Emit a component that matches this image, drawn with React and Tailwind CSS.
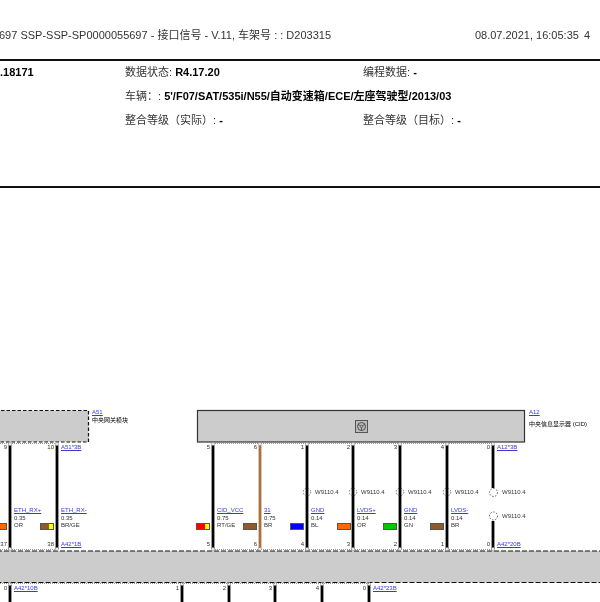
const sans = "font-['Liberation_Sans','Noto_Sans_CJK_SC',sans-serif]"

const wires = [
  { x: 10, top: "9", bottom: "37", name: "ETH_RX+", size: "0.35", code: "OR", colors: ["#ff6a00"], sw: -7 },
  { x: 57, top: "10", bottom: "38", name: "ETH_RX-", size: "0.35", code: "BR/GE", colors: ["#8f5a2c", "#ffff00"], sw: 40 },
  { x: 213, top: "5", bottom: "5", name: "CID_VCC", size: "0.75", code: "RT/GE", colors: ["#ff0000", "#ffff00"], sw: 196 },
  { x: 260, top: "6", bottom: "6", name: "31", size: "0.75", code: "BR", colors: ["#8f5a2c"], sw: 243, stroke: "#a9703f" },
  { x: 307, top: "1", bottom: "4", name: "GND", size: "0.14", code: "BL", colors: ["#0000ff"], sw: 290, w9: true },
  { x: 353, top: "2", bottom: "3", name: "LVDS+", size: "0.14", code: "OR", colors: ["#ff6a00"], sw: 337, w9: true },
  { x: 400, top: "3", bottom: "2", name: "GND", size: "0.14", code: "GN", colors: ["#00c800"], sw: 383, w9: true },
  { x: 447, top: "4", bottom: "1", name: "LVDS-", size: "0.14", code: "BR", colors: ["#8f5a2c"], sw: 430, w9: true },
]

const lowerWires = [
  { x: 10, pin: "0" },
  { x: 182, pin: "1" },
  { x: 229, pin: "2" },
  { x: 275, pin: "3" },
  { x: 322, pin: "4" },
  { x: 369, pin: "0" },
]

// y values below are page coordinates, the canvas starts at 188
const Y0 = 188

function Label({ x, y, className = "text-[6px] text-[#333]", children }) {
  return (
    <div
      className={`absolute whitespace-nowrap leading-none ${className}`}
      style={{ left: x, top: y - Y0 }}
    >
      {children}
    </div>
  )
}

function Link({ x, y, children }) {
  return (
    <Label x={x} y={y} className="text-[6px] text-[#3a3ad0] underline">
      {children}
    </Label>
  )
}

function Pin({ x, y, children }) {
  return (
    <div
      className="absolute w-5 text-right whitespace-nowrap leading-none text-[6px] text-[#333]"
      style={{ left: x - 23, top: y - Y0 }}
    >
      {children}
    </div>
  )
}

function WireLabel({ wire }) {
  return (
    <div
      className="absolute flex items-end gap-[3px] leading-[7.5px] text-[6px] text-[#333] whitespace-nowrap"
      style={{ left: wire.sw, top: 507 - Y0 }}
    >
      <div className="flex h-[7px] w-[14px] border border-[#555]">
        {wire.colors.map((c, i) => (
          <div key={c} className={i === 0 ? "flex-1" : "w-[4px]"} style={{ background: c }} />
        ))}
      </div>
      <div className="flex flex-col" style={{ marginLeft: wire.x + 4 - wire.sw - 17 }}>
        <span className="text-[#3a3ad0] underline">{wire.name}</span>
        <span>{wire.size}</span>
        <span>{wire.code}</span>
      </div>
    </div>
  )
}

function Diagram() {
  return (
    <svg className="absolute left-0 top-0" width="600" height="414" viewBox={`0 ${Y0} 600 414`}>
      <rect x="-10" y="410.5" width="98.5" height="31.5" fill="#cccccc" stroke="#111" strokeWidth="1.2" strokeDasharray="3.5 2" />
      <rect x="197.5" y="410.5" width="327" height="31.5" fill="#cccccc" stroke="#333" strokeWidth="1.2" />
      <rect x="-10" y="551" width="620" height="31.5" fill="#cccccc" stroke="#111" strokeWidth="1.2" strokeDasharray="5 2" />

      <line x1="0" x2="57" y1="443.5" y2="443.5" stroke="#999" strokeDasharray="1 1" />
      <line x1="213" x2="493" y1="443.5" y2="443.5" stroke="#999" strokeDasharray="1 1" />
      <line x1="0" x2="57" y1="549.5" y2="549.5" stroke="#999" strokeDasharray="1 1" />
      <line x1="213" x2="493" y1="549.5" y2="549.5" stroke="#999" strokeDasharray="1 1" />

      {wires.map((w) => (
        <g key={w.x}>
          <line x1={w.x} x2={w.x} y1="445" y2="549" stroke={w.stroke || "#000"} strokeWidth="2.8" />
          <circle cx={w.x} cy="444" r="1.5" fill="#fff" stroke="#888" strokeWidth="0.6" />
          <circle cx={w.x} cy="549" r="1.5" fill="#fff" stroke="#888" strokeWidth="0.6" />
          {w.w9 && <circle cx={w.x} cy="492" r="3.8" fill="none" stroke="#444" strokeWidth="0.7" strokeDasharray="1.5 1.5" />}
        </g>
      ))}

      <line x1="493" x2="493" y1="445" y2="488" stroke="#000" strokeWidth="2.8" />
      <line x1="493" x2="493" y1="521" y2="549" stroke="#000" strokeWidth="2.8" />
      <circle cx="493" cy="444" r="1.5" fill="#fff" stroke="#888" strokeWidth="0.6" />
      <circle cx="493" cy="549" r="1.5" fill="#fff" stroke="#888" strokeWidth="0.6" />
      <circle cx="493.5" cy="492.5" r="4" fill="#fff" stroke="#333" strokeWidth="0.8" strokeDasharray="1.5 1.5" />
      <circle cx="493.5" cy="516" r="4" fill="#fff" stroke="#333" strokeWidth="0.8" strokeDasharray="1.5 1.5" />

      {lowerWires.map((w) => (
        <g key={w.x}>
          <line x1={w.x} x2={w.x} y1="585" y2="602" stroke="#000" strokeWidth="2.8" />
          <circle cx={w.x} cy="584" r="1.5" fill="#fff" stroke="#888" strokeWidth="0.6" />
        </g>
      ))}
      <line x1="0" x2="369" y1="583.5" y2="583.5" stroke="#999" strokeDasharray="1 1" />

      {/* steering wheel symbol in the A12 box */}
      <rect x="355.5" y="420.5" width="12" height="12" fill="#bbb" stroke="#555" />
      <circle cx="361.5" cy="426.5" r="4" fill="none" stroke="#444" strokeWidth="0.9" />
      <circle cx="361.5" cy="426.5" r="1.2" fill="none" stroke="#444" strokeWidth="0.7" />
      <path d="M358 424.5l2.5 1.2M365 424.5l-2.5 1.2M361.5 427.7v2.8" fill="none" stroke="#444" strokeWidth="0.8" />
    </svg>
  )
}

export default function App() {
  return (
    <div className={`w-[600px] h-[602px] overflow-hidden bg-white blur-[0.3px] text-[11px] text-[#333] ${sans}`}>
      <header className="flex justify-between h-[59px] pt-[29px] pr-[10px] leading-[12px]">
        <span className="-ml-px whitespace-nowrap">697 SSP-SSP-SP0000055697 - 接口信号 - V.11, 车架号 : : D203315</span>
        <span className="flex gap-[5px] whitespace-nowrap">
          <span>08.07.2021, 16:05:35</span>
          <span>4</span>
        </span>
      </header>

      <section className="grid grid-cols-[125px_238px_1fr] auto-rows-[12px] gap-y-3 h-[129px] pt-[5px] border-y-2 border-[#111] leading-[12px]">
        <b className="text-black">.18171</b>
        <span>数据状态: <b className="text-black">R4.17.20</b></span>
        <span>编程数据: <b className="text-black">-</b></span>
        <div className="col-start-2 col-span-2">车辆：: <b className="text-black">5'/F07/SAT/535i/N55/自动变速箱/ECE/左座驾驶型/2013/03</b></div>
        <span className="col-start-2">整合等级（实际）: <b className="text-black">-</b></span>
        <span>整合等级（目标）: <b className="text-black">-</b></span>
      </section>

      <section className="relative h-[414px]">
        <Diagram />

        <Link x={92} y={409}>A51</Link>
        <Label x={92} y={417} className="text-black text-[6px]">中央网关模块</Label>
        <Link x={529} y={409}>A12</Link>
        <Label x={529} y={421} className="text-black text-[6px]">中央信息显示器 (CID)</Label>

        {wires.map((w) => (
          <div key={w.x}>
            <Pin x={w.x} y={444}>{w.top}</Pin>
            <Pin x={w.x} y={541}>{w.bottom}</Pin>
            <WireLabel wire={w} />
            {w.w9 && <Label x={w.x + 8} y={489}>W9110.4</Label>}
          </div>
        ))}

        <Pin x={493} y={444}>0</Pin>
        <Pin x={493} y={541}>0</Pin>
        <Label x={502} y={489}>W9110.4</Label>
        <Label x={502} y={513}>W9110.4</Label>

        <Link x={61} y={444}>A51*3B</Link>
        <Link x={61} y={541}>A42*1B</Link>
        <Link x={497} y={444}>A12*3B</Link>
        <Link x={497} y={541}>A42*20B</Link>
        <Link x={14} y={585}>A42*10B</Link>
        <Link x={373} y={585}>A42*23B</Link>

        {lowerWires.map((w) => (
          <Pin key={w.x} x={w.x} y={585}>{w.pin}</Pin>
        ))}
      </section>
    </div>
  )
}
